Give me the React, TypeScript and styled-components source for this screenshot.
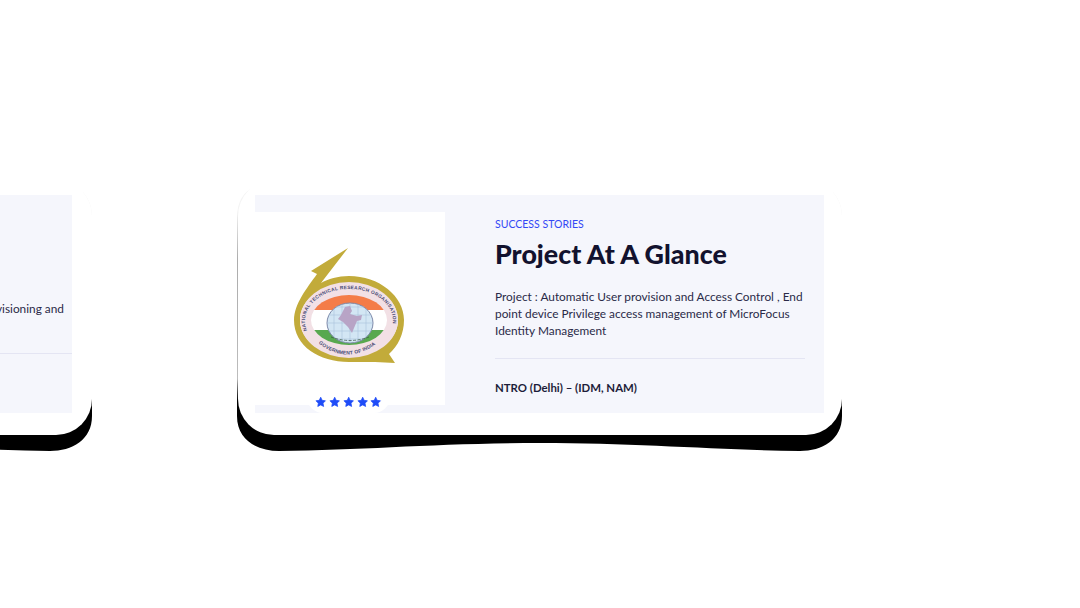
import React from "react";
import styled, { createGlobalStyle } from "styled-components";

const Global = createGlobalStyle`
  html, body { margin: 0; padding: 0; overflow: hidden; }
  body { font-family: "Lato", "Noto Sans", sans-serif; width: 1080px; height: 608px; }
`;

const Track = styled.div`
  isolation: isolate;
  display: flex;
  gap: 146px;
  margin-left: -512px;
  padding-top: 180px;
  width: max-content;
`;

const Card = styled.article<{ $inset: number }>`
  position: relative;
  width: 604px;
  height: 255px;
  box-sizing: border-box;
  padding: 15px ${(p) => p.$inset}px 22px 17px;
  background: #fff;
  border-radius: 36px;
  &::before {
    content: "";
    position: absolute;
    z-index: -1;
    left: -1px;
    right: 0;
    top: 4px;
    bottom: -16px;
    background: linear-gradient(to bottom, #f4f4f4 0 10%, #acacac 28%, #bcbcbc 73%, #000 81%);
    clip-path: path("M0 34 Q0 0 36 0 H569 Q605 0 605 34 V232 C605 256 585 267 563 267 C480 266 400 259 303 259 C200 259 130 266 42 267 C20 267 0 256 0 232 Z");
  }
`;

const Panel = styled.div`
  display: flex;
  gap: 50px;
  height: 218px;
  box-sizing: border-box;
  padding: 17px 19px 8px 0;
  background: #f5f6fc;
`;

const Media = styled.div`
  position: relative;
  flex: 0 0 190px;
  height: 193px;
  background: #fff;
  display: flex;
  justify-content: center;
`;

const Logo = styled.svg`
  width: 190px;
  height: 193px;
  display: block;
`;

const Rating = styled.div`
  position: absolute;
  left: 52px;
  bottom: -8px;
  width: 83px;
  height: 20px;
  box-sizing: border-box;
  padding-top: 3px;
  background: #fff;
  border-radius: 0 0 16px 16px;
  display: flex;
  justify-content: center;
  gap: 2.4px;
`;

const Star = styled.svg`
  width: 11.4px;
  height: 11.4px;
  fill: #1f4cf8;
  stroke: #1f4cf8;
  stroke-width: 1.5;
  stroke-linejoin: round;
`;

const Body = styled.div<{ $clipped?: boolean }>`
  flex: 1;
  min-width: 0;
  display: flex;
  flex-direction: column;
  align-items: stretch;
  margin-right: ${(p) => (p.$clipped ? "-19px" : "0")};
`;

const Eyebrow = styled.div`
  font-size: 10.5px;
  line-height: 14px;
  margin-top: 5px;
  color: #3348f5;
`;

const Title = styled.h2`
  margin: 7px 0 0;
  font-size: 26.8px;
  line-height: 32px;
  font-weight: 900;
  color: #12122e;
`;

const Text = styled.p`
  margin: 18px 0 0;
  font-size: 11.85px;
  line-height: 17px;
  color: #2a2a48;
`;

const ClippedText = styled.p`
  margin: 88px 8px 0 0;
  font-size: 11.85px;
  line-height: 17px;
  color: #2a2a48;
  text-align: right;
  white-space: nowrap;
`;

const Rule = styled.hr<{ $gap: number }>`
  margin: ${(p) => p.$gap}px 0 0;
  border: 0;
  height: 1px;
  background: #e4e5f3;
`;

const Client = styled.div`
  margin-top: 21px;
  font-size: 11.4px;
  line-height: 16px;
  font-weight: 700;
  color: #1d1d3a;
`;

const stars = [0, 1, 2, 3, 4];

const Stars = () => (
  <Rating>
    {stars.map((s) => (
      <Star key={s} viewBox="0 0 24 24">
        <path d="M12 2.5l3 6.6 7 1-5 5 1.2 7-6.2-3.4-6.2 3.4 1.2-7-5-5 7-1z" />
      </Star>
    ))}
  </Rating>
);

const gridLines = [-16, -8, 0, 8, 16];

const NtroLogo = () => (
  <Logo viewBox="0 0 190 193">
    <defs>
      <path id="arcTop" d="M52 118.5 A44 32 0 1 1 136 118.5" />
      <path id="arcBottom" d="M62 130 Q92 155 124 130" />
      <clipPath id="inner">
        <ellipse cx="94" cy="108" rx="38" ry="25" />
      </clipPath>
      <clipPath id="globe">
        <ellipse cx="95" cy="111" rx="23" ry="20" />
      </clipPath>
    </defs>
    <path
      fill="#c2ab3a"
      fillRule="evenodd"
      d="M93 36 L56 59 L62 62 C52 76 39 92 39 108 C39 134 64 150 94 150 L120 150 L140 151 L134 142 C143 134 149 122 149 108 C149 84 124 64 94 64 C83 64 73 67 66 71 Z M94 72 C122 72 143 88 143 108 C143 128 122 144 94 144 C66 144 45 128 45 108 C45 88 66 72 94 72 Z"
    />
    <ellipse cx="94" cy="108" rx="49" ry="38" fill="#f2e0e5" />
    <g clipPath="url(#inner)">
      <rect x="50" y="80" width="90" height="18" fill="#f47c48" />
      <rect x="50" y="98" width="90" height="20" fill="#fff" />
      <rect x="50" y="118" width="90" height="16" fill="#58a84f" />
    </g>
    <ellipse cx="95" cy="111" rx="23" ry="20" fill="#d3e6f4" stroke="#7c88a8" strokeWidth="1" />
    <g clipPath="url(#globe)" stroke="#a9c3dc" strokeWidth="0.6">
      {gridLines.map((d) => (
        <line key={`v${d}`} x1={95 + d} y1="90" x2={95 + d} y2="132" />
      ))}
      {gridLines.map((d) => (
        <line key={`h${d}`} x1="70" y1={111 + d} x2="120" y2={111 + d} />
      ))}
    </g>
    <path
      fill="#b8a4c6"
      d="M90 95 L95 94 L97 99 L95 102 L102 104 L107 103 L106 108 L102 109 L99 116 L97 121 L93 115 L88 110 L83 107 L86 103 L88 99 Z"
    />
    <path d="M76 125 Q95 132 114 125" fill="none" stroke="#33503a" strokeWidth="1" strokeDasharray="3 1.5" opacity="0.7" />
    <text fontFamily="Liberation Sans" fontSize="4.8" fontWeight="700" fill="#4a4d78">
      <textPath href="#arcTop" textLength="132" lengthAdjust="spacing">NATIONAL TECHNICAL RESEARCH ORGANISATION</textPath>
    </text>
    <text fontFamily="Liberation Sans" fontSize="5" fontWeight="700" fill="#4a4d78">
      <textPath href="#arcBottom" textLength="62" startOffset="2">GOVERNMENT OF INDIA</textPath>
    </text>
  </Logo>
);

export default function App() {
  return (
    <>
      <Global />
      <Track>
        <Card $inset={20}>
          <Panel>
            <Media />
            <Body $clipped>
              <ClippedText>Project : Automatic User provisioning and</ClippedText>
              <Rule $gap={36} />
            </Body>
          </Panel>
        </Card>
        <Card $inset={18}>
          <Panel>
            <Media>
              <NtroLogo />
              <Stars />
            </Media>
            <Body>
              <Eyebrow>SUCCESS STORIES</Eyebrow>
              <Title>Project At A Glance</Title>
              <Text>
                Project : Automatic User provision and Access Control , End point device Privilege
                access management of MicroFocus Identity Management
              </Text>
              <Rule $gap={19} />
              <Client>NTRO (Delhi) – (IDM, NAM)</Client>
            </Body>
          </Panel>
        </Card>
      </Track>
    </>
  );
}
